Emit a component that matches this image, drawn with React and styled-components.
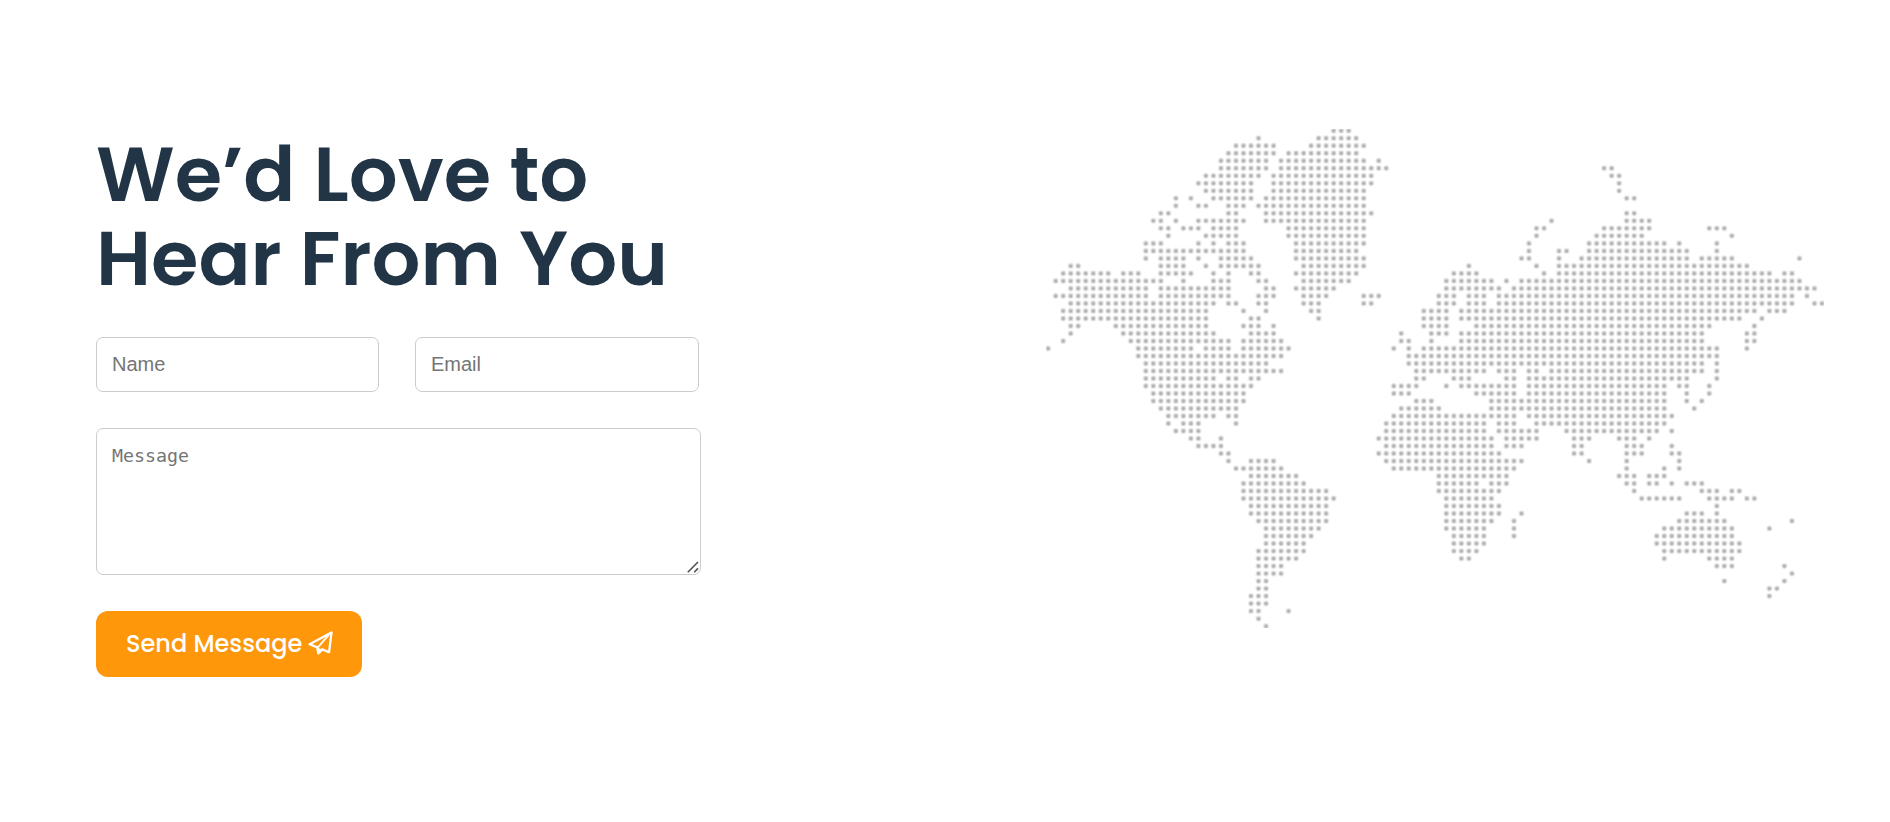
import React from "react";
import styled, { createGlobalStyle } from "styled-components";

const GlobalStyle = createGlobalStyle`
  *, *::before, *::after { box-sizing: border-box; }
  body { margin: 0; background: #fff; }
`;

const Section = styled.section`
  display: flex;
  justify-content: space-between;
  align-items: flex-start;
  min-height: 822px;
  padding: 129px 66px 0 96px;
`;

const Contact = styled.div`
  width: 605px;
  padding-top: 3px;
`;

const Title = styled.h1`
  margin: 0 0 36px;
  font-family: Poppins, Inter, sans-serif;
  font-size: 76.8px;
  font-weight: 600;
  line-height: 1.1;
  color: #213547;
`;

const Form = styled.form`
  display: flex;
  flex-direction: column;
  align-items: flex-start;
  gap: 36px;
`;

const FieldRow = styled.div`
  display: grid;
  grid-template-columns: 283px 284px;
  gap: 36px;
`;

const Input = styled.input`
  width: 100%;
  height: 55px;
  padding: 0 15px;
  border: 1px solid #ccc;
  border-radius: 7px;
  background: #fff;
  font-family: "Liberation Sans", Arial, sans-serif;
  font-size: 20px;
  &::placeholder { color: #757575; }
`;

const MessageBox = styled.div`
  position: relative;
  width: 605px;
  height: 147px;
`;

const TextArea = styled.textarea`
  display: block;
  width: 100%;
  height: 100%;
  padding: 15px;
  border: 1px solid #ccc;
  border-radius: 7px;
  background: #fff;
  font-family: Consolas, "DejaVu Sans Mono", monospace;
  font-size: 18.3px;
  line-height: 23px;
  resize: none;
  &::placeholder { color: #757575; }
`;

const ResizeGrip = styled.svg`
  position: absolute;
  right: 2px;
  bottom: 2px;
  width: 12px;
  height: 12px;
  pointer-events: none;
`;

const SendButton = styled.button`
  display: flex;
  align-items: center;
  gap: 6px;
  height: 66px;
  width: 266px;
  padding: 1px 0 0 30px;
  border: 0;
  border-radius: 12px;
  background: #ff970b;
  color: #fff;
  font-family: Poppins, Inter, sans-serif;
  font-size: 24px;
  font-weight: 500;
  line-height: 36px;
  white-space: nowrap;
`;

const PlaneSvg = styled.svg`
  flex: none;
  width: 25px;
  height: 24px;
  margin-top: -3px;
`;

const MapSvg = styled.svg`
  display: block;
  width: 778px;
  height: 499px;
  overflow: hidden;
`;

// Land cells of the dotted world map, one string per row: "a-b" is a run of columns.
const ROWS = [
  "38-40",
  "28 36-41",
  "25-30 35-42",
  "24-30 32-41",
  "23-29 31-42 44",
  "23-29 31-45 74-75",
  "21-28 30-43 75-76",
  "20-27 30-43 76",
  "21-27 30-42 76",
  "17 19 22-27 29-42 77-78",
  "17 20-21 24-26 28-42",
  "15-16 24-25 29-43 77-78",
  "14-15 17 20-26 29-42 67 77-80",
  "15-16 18-20 22-25 32-42 65-66 74-80 88-90",
  "16 21-25 32-42 65 73-79 91",
  "13-15 20 22 24-26 33-42 64 72-82 84 89",
  "13-26 33-41 64 68-69 72-85 89",
  "13 15-18 20 23-27 33-42 63-64 68 71-85 87-91 100",
  "3-4 15-18 21 23-28 34-42 56 65 68-93",
  "2-8 10-12 15-19 22 24 27-28 33-41 54-57 66 68-96 98-99",
  "1-15 18 22-24 28-29 34-40 53-59 61 63-100",
  "3-13 15-24 29-30 33-38 53-60 62-102",
  "1-13 15-24 28-30 34-37 42-44 52-54 56-58 60-99 101",
  "3-22 24-25 28-29 34-36 42-43 52-54 56-58 60-99 102-103",
  "2-21 26 29 35-36 50-53 55-94 96-98",
  "2-21 27-28 36 50-53 55-92 95",
  "3-4 9-21 26-28 30 50-53 57-88 94",
  "3 10-22 27-30 47 51-53 55-87 93-94",
  "2 11-24 26-31 47-48 51 55-87 93-94",
  "0 12-19 21-24 26-32 46 48 50-89 93",
  "12-31 48-89",
  "13-29 48-87 89",
  "13-31 49-58 60-62 64-65 67-87 89",
  "13-22 24-25 27-28 49-50 54-56 61-62 64-85 89",
  "13-27 46-49 53 55-62 64-82 84-85 88",
  "14-26 46-48 57-62 64-82 85 88",
  "14-26 49-51 59-82 85 87",
  "15-25 47-52 59-82 86",
  "16-22 24-25 46-62 64-83",
  "16 18-20 25 45-58 60-62 65-82",
  "17-20 45-58 60-65 69-81 83",
  "19-20 23 44-59 61-65 70-72 76-78 80",
  "20-23 45-59 61-63 70-71 77-79 83",
  "23-24 44-60 70-71 77-79 83-84",
  "24 27-30 45-63 72 77 84",
  "25-31 46-62 77 82 84",
  "27-33 52-61 76-78 80-82",
  "26-34 52-57 59-61 77-78 80-81 83 85-87",
  "26-37 52-60 78 87-89 91-92",
  "26-38 53-59 79-84 88-91 93-94",
  "27-37 53-60 89",
  "27-37 53-60 63 85-87 89",
  "28-37 53-59 62 84-90 99",
  "29-36 53-58 62 82-91 96",
  "29-35 54-58 62 81-91",
  "29-34 54-58 81-92",
  "28-34 54-57 82-92",
  "28-33 55-56 82 88-91",
  "28-31 89-91 98",
  "28-31 99",
  "28-29 90 98",
  "28-29 96-97",
  "27-29 96",
  "27-29",
  "27-28 32",
  "28",
  "29",
];

const DOTS = ROWS.map((row, r) =>
  row
    .split(" ")
    .map((run) => {
      const [a, b = a] = run.split("-").map(Number);
      let d = "";
      for (let c = a; c <= b; c += 1) {
        d += `M${(2.15 + c * 7.513).toFixed(2)} ${(1.8 + r * 7.505).toFixed(2)}h.01`;
      }
      return d;
    })
    .join("")
).join("");

function WorldMap() {
  return (
    <MapSvg viewBox="0 0 778 499" role="img" aria-label="World map">
      <g fill="none" strokeLinecap="round">
        <path d={DOTS} stroke="#f1f1f1" strokeWidth="6.6" />
        <path d={DOTS} stroke="#d4d4d4" strokeWidth="4.9" />
        <path d={DOTS} stroke="#b4b4b4" strokeWidth="3" />
      </g>
    </MapSvg>
  );
}

function PlaneIcon() {
  return (
    <PlaneSvg viewBox="0 0 25 24" fill="none" aria-hidden="true">
      <path
        d="M1.6 13.2L23.5 1.4L21.1 21.2L14.3 18.4L10.4 22.4L9.2 16.4Z"
        stroke="currentColor"
        strokeWidth="2.3"
        strokeLinejoin="round"
      />
      <path d="M9.6 16.6L20.8 3.8" stroke="currentColor" strokeWidth="1.8" />
      <path d="M9.2 16.4L14.3 18.4L10.4 22.4Z" fill="currentColor" />
    </PlaneSvg>
  );
}

export default function App() {
  return (
    <>
      <GlobalStyle />
      <Section>
        <Contact>
          <Title>
            We’d Love to
            <br />
            Hear From You
          </Title>
          <Form onSubmit={(e) => e.preventDefault()}>
            <FieldRow>
              <Input type="text" placeholder="Name" />
              <Input type="email" placeholder="Email" />
            </FieldRow>
            <MessageBox>
              <TextArea placeholder="Message" />
              <ResizeGrip viewBox="0 0 12 12" aria-hidden="true">
                <path d="M.8 11.2L11 1M7.2 11.2L11 7.4" stroke="#505050" strokeWidth="1.6" />
              </ResizeGrip>
            </MessageBox>
            <SendButton type="submit">
              <span>Send Message</span>
              <PlaneIcon />
            </SendButton>
          </Form>
        </Contact>
        <WorldMap />
      </Section>
    </>
  );
}
